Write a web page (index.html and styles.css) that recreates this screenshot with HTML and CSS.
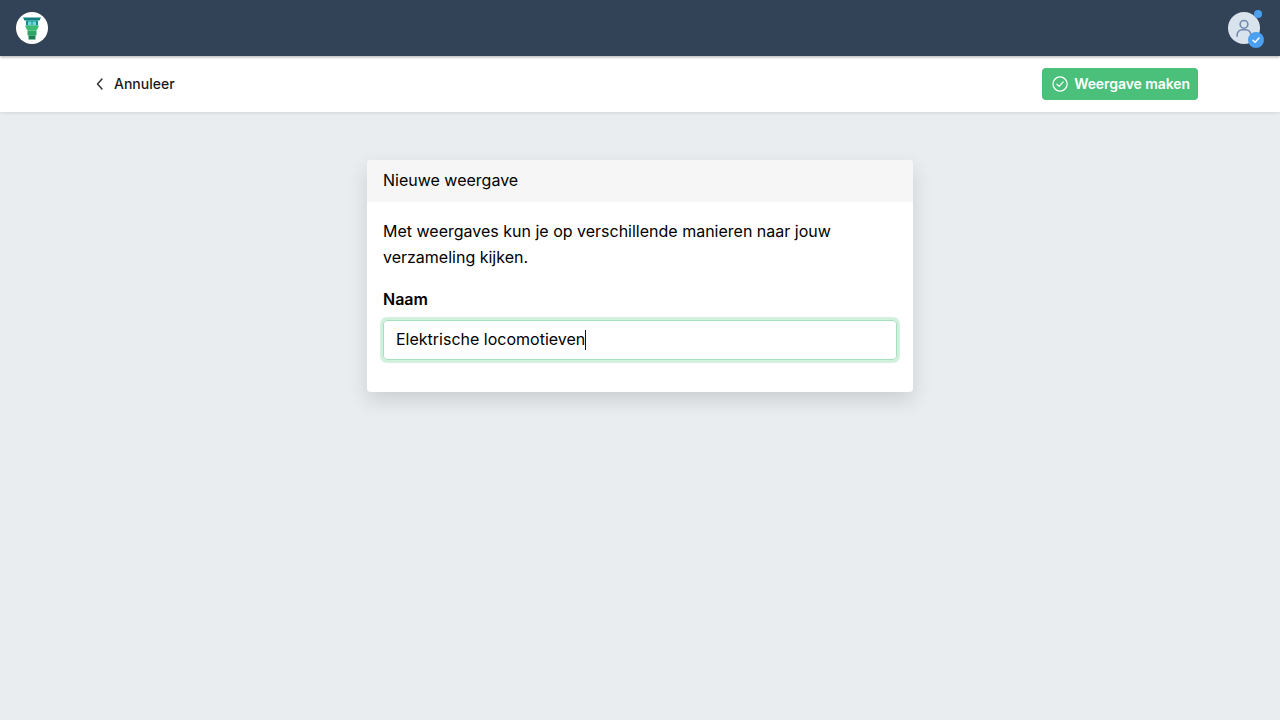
FILE: index.html
```html
<!DOCTYPE html>
<html lang="nl">
<head>
<meta charset="utf-8">
<title>Nieuwe weergave</title>
<link rel="stylesheet" href="styles.css">
</head>
<body>
<header class="topbar">
  <div class="logo">
    <svg width="18" height="23" viewBox="0 0 18 23">
      <path d="M0 0.500h18l-1.500 3H1.500z" fill="#0e7f7c"/>
      <path d="M3 3.500h12v5H3z" fill="#118f8b"/>
      <path d="M5 4.500h3.500v3.500H5zM9.500 4.500H13v3.500H9.500z" fill="#6fd6dc"/>
      <path d="M2 8.500h14l-1.500 3.500 -1 1.500h-9l-1-1.500z" fill="#3dbb72"/>
      <path d="M4.500 13.500h9v5h-9z" fill="#2ca566"/>
      <path d="M5.500 18.500h7v4h-7z" fill="#177f52"/>
    </svg>
  </div>
  <div class="avatar-wrap">
    <div class="avatar">
      <svg width="22" height="22" viewBox="0 0 24 24" fill="none" stroke="#7189ab" stroke-width="1.700" stroke-linecap="round" stroke-linejoin="round">
        <circle cx="12" cy="8" r="4.200"/>
        <path d="M4.500 21v-1.500a5.500 5.500 0 0 1 5.500-5.500h4a5.500 5.500 0 0 1 5.500 5.500V21"/>
      </svg>
    </div>
    <span class="dot"></span>
    <span class="verified">
      <svg width="10" height="10" viewBox="0 0 10 10" fill="none" stroke="#fff" stroke-width="1.500" stroke-linecap="round" stroke-linejoin="round"><path d="M2 5.200l2.100 2L8 3"/></svg>
    </span>
  </div>
</header>
<nav class="actionbar">
  <a class="cancel">
    <svg width="16" height="16" viewBox="0 0 16 16" fill="none" stroke="#333" stroke-width="1.500" stroke-linecap="round" stroke-linejoin="round"><path d="M10 3L5.500 8l4.500 5"/></svg>
    <span class="cancel-text">Annuleer</span>
  </a>
  <button class="primary">
    <svg width="18" height="18" viewBox="0 0 18 18" fill="none" stroke="#fff" stroke-width="1.400" stroke-linecap="round" stroke-linejoin="round"><circle cx="9" cy="9" r="7.900"/><path d="M5.500 9.300l2.500 2.400 4.500-5.100"/></svg>
    <span class="primary-text">Weergave maken</span>
  </button>
</nav>
<main class="content">
  <section class="card">
    <div class="card-header">Nieuwe weergave</div>
    <div class="card-body">
      <p class="intro">Met weergaves kun je op verschillende manieren naar jouw verzameling kijken.</p>
      <label class="label">Naam</label>
      <div class="input"><span class="input-text">Elektrische locomotieven</span><i class="caret"></i></div>
    </div>
  </section>
</main>
</body>
</html>
```
FILE: styles.css
```css
* { box-sizing: border-box; }
html, body { height: 100%; }
body {
  margin: 0;
  background: #e9edf0;
  color: #000;
  font-family: Inter, "Liberation Sans", sans-serif;
  font-size: 16px;
  display: flex;
  flex-direction: column;
  overflow: hidden;
}
.topbar {
  height: 56px;
  flex: none;
  background: #334357;
  display: flex;
  align-items: center;
  justify-content: space-between;
  padding: 0 20px 0 16px;
  box-shadow: 0 1px 3px rgba(0,0,0,.35);
  position: relative;
  z-index: 2;
}
.logo {
  width: 32px;
  height: 32px;
  border-radius: 50%;
  background: #fff;
  display: flex;
  align-items: center;
  justify-content: center;
}
.avatar-wrap { position: relative; width: 32px; height: 32px; }
.avatar {
  width: 32px;
  height: 32px;
  border-radius: 50%;
  background: #d9e3ee;
  display: flex;
  align-items: center;
  justify-content: center;
}
.dot {
  position: absolute;
  top: -2px;
  right: -2px;
  width: 8px;
  height: 8px;
  border-radius: 50%;
  background: #4a9ff0;
}
.verified {
  position: absolute;
  right: -4px;
  bottom: -4px;
  width: 16px;
  height: 16px;
  border-radius: 50%;
  background: #4a9ff0;
  display: flex;
  align-items: center;
  justify-content: center;
}
.actionbar {
  height: 56px;
  flex: none;
  background: #fff;
  display: flex;
  align-items: center;
  justify-content: space-between;
  padding: 0 82px 0 92px;
  box-shadow: 0 1px 3px rgba(0,0,0,.1);
  position: relative;
  z-index: 1;
}
.cancel {
  display: flex;
  align-items: center;
  gap: 6px;
  font-size: 14px;
  font-weight: 500;
  color: #1a1a1a;
}
.cancel-text { line-height: 16px; margin-top: -1px; }
.primary {
  height: 32px;
  width: 156px;
  border: 0;
  border-radius: 4px;
  background: #4bc07a;
  color: #fff;
  font: 600 14px Inter, "Liberation Sans", sans-serif;
  display: flex;
  align-items: center;
  gap: 6px;
  padding: 0 8px 0 10px;
}
.primary-text { white-space: nowrap; margin-top: -2px; letter-spacing: -0.07px; }
.content {
  flex: 1;
  display: flex;
  justify-content: center;
  padding-top: 48px;
}
.card {
  width: 546px;
  height: 232px;
  background: #fff;
  border-radius: 4px;
  overflow: hidden;
  box-shadow: 0 8px 20px rgba(0,0,0,.13);
}
.card-header {
  height: 42px;
  background: #f6f6f6;
  padding: 0 16px;
  line-height: 41px;
  font-size: 16px;
}
.card-body { padding: 16px 16px 32px; }
.intro {
  margin: 0 0 16px;
  line-height: 26px;
}
.label {
  display: block;
  font-weight: 600;
  line-height: 26px;
  margin-bottom: 8px;
}
.input {
  height: 40px;
  border: 1px solid #a3e0bb;
  border-radius: 4px;
  box-shadow: 0 0 1px 3px #d2f0de;
  padding: 0 12px;
  display: flex;
  align-items: center;
  line-height: 24px;
}
.input-text { margin-top: -2px; }
.caret {
  display: block;
  width: 1px;
  height: 20px;
  background: #111;
}
```
